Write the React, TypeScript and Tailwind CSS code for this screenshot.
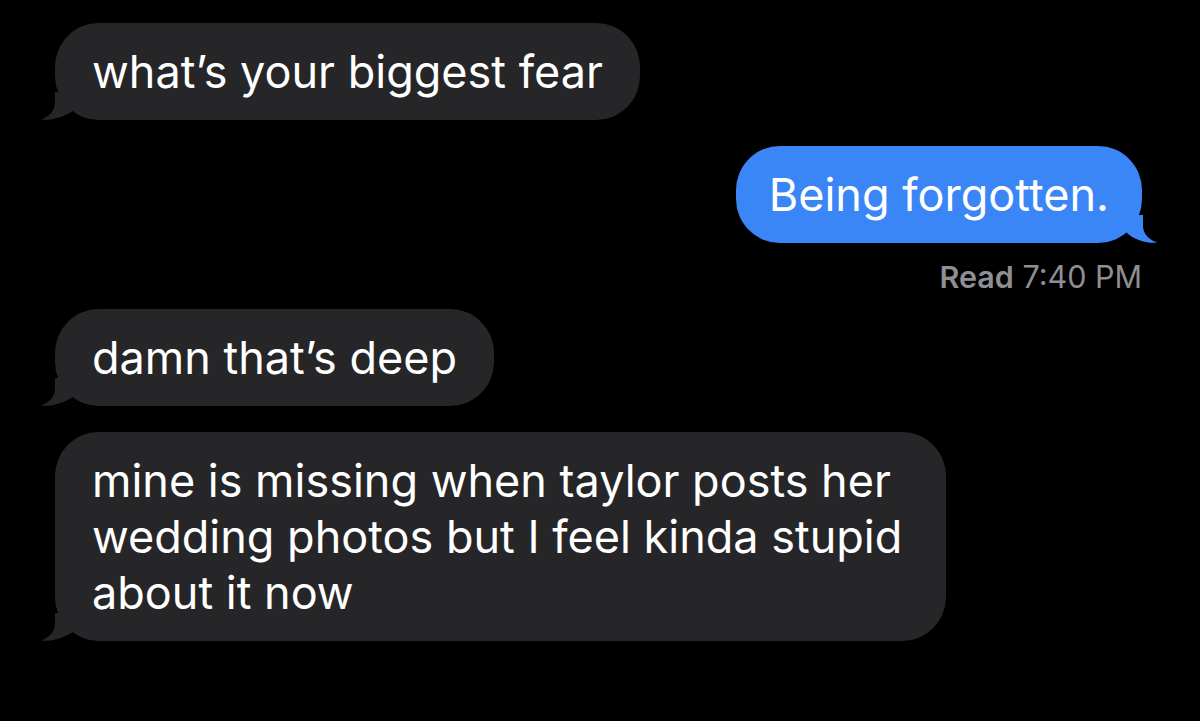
const font = { fontFamily: "Inter, 'Noto Sans', sans-serif" };

function LeftTail() {
  return (
    <svg
      className="absolute left-[-15px] bottom-0"
      width="40"
      height="28"
      viewBox="0 0 40 28"
    >
      <path
        d="M15 0 L15 10 C15 19 10 24 1 27.6 C11 28.8 25 25 34 18 L34 0 Z"
        fill="#262628"
      />
    </svg>
  );
}

function RightTail() {
  return (
    <svg
      className="absolute right-[-16px] bottom-0"
      width="40"
      height="28"
      viewBox="0 0 40 28"
    >
      <path
        d="M25 0 L25 10 C25 19 30 24 39 27.6 C29 28.8 16 25 8 17 L8 0 Z"
        fill="#3b86f6"
      />
    </svg>
  );
}

type BubbleProps = {
  children: React.ReactNode;
  className?: string;
};

function Received({ children, className = "" }: BubbleProps) {
  return (
    <div
      className={`relative self-start ml-[55px] rounded-[44px] bg-[#262628] px-[37px] py-[20.5px] text-[45px] leading-[56px] text-white ${className}`}
    >
      <LeftTail />
      <span className="relative">{children}</span>
    </div>
  );
}

export default function App() {
  return (
    <div
      className="flex min-h-screen w-full flex-col bg-black pt-[23px] pb-10"
      style={font}
    >
      <Received>what’s your biggest fear</Received>

      <div className="relative self-end mr-[58px] mt-[26px] rounded-[44px] bg-[#3b86f6] px-[33px] py-[20.5px] text-[45px] leading-[56px] text-white">
        <RightTail />
        <span className="relative">Being forgotten.</span>
      </div>

      <div className="self-end mr-[58px] mt-[16px] text-[30.5px] leading-[35px] text-[#8e8e93]">
        <span className="font-semibold">Read</span> 7:40 PM
      </div>

      <Received className="mt-[15px]">damn that’s deep</Received>

      <Received className="mt-[26px] w-[891px]">
        mine is missing when taylor posts her
        <br />
        wedding photos but I feel kinda stupid
        <br />
        about it now
      </Received>
    </div>
  );
}
